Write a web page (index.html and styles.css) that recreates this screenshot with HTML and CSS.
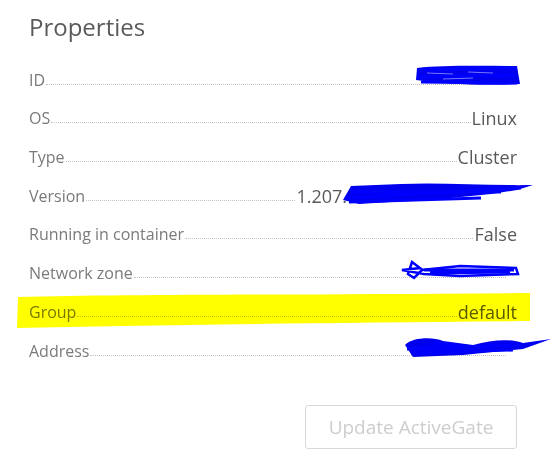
FILE: index.html
```html
<!DOCTYPE html>
<html>
<head>
<meta charset="utf-8">
<link rel="stylesheet" href="styles.css">
</head>
<body>
<div class="panel">
  <h1 class="title">Properties</h1>
  <div class="props">
    <div class="row"><span class="label">ID</span><span class="leader"></span><span class="value scr-id"></span>
      <svg class="scribble s-id" width="110" height="24" viewBox="0 0 110 24"><path d="M4 4 C30 1 70 2 104 2 L107 20 C70 22 30 20 3 16 Z" fill="#0000ee"/><path d="M4 6 L104 4 M6 13 L102 11 M8 18 L104 19" stroke="#0000ff" stroke-width="3" fill="none"/><path d="M14 9 L40 10 M55 8 L80 9 M30 15 L60 14" stroke="#7777ff" stroke-width="1" fill="none"/></svg>
    </div>
    <div class="row"><span class="label">OS</span><span class="leader"></span><span class="value">Linux</span></div>
    <div class="row"><span class="label">Type</span><span class="leader"></span><span class="value">Cluster</span></div>
    <div class="row"><span class="label">Version</span><span class="leader"></span><span class="value v-version">1.207.</span>
      <svg class="scribble s-ver" width="196" height="26" viewBox="0 0 196 26"><path d="M2 20 L10 6 L60 4 C100 2 150 6 192 5 L176 10 L150 14 L120 17 L90 20 L50 22 L18 24 Z" fill="#0000ee"/><path d="M4 18 L180 8 M10 12 L160 12 M8 22 L140 18" stroke="#0000ff" stroke-width="3" fill="none"/></svg>
    </div>
    <div class="row"><span class="label">Running in container</span><span class="leader"></span><span class="value">False</span></div>
    <div class="row"><span class="label">Network zone</span><span class="leader"></span><span class="value v-blank"></span>
      <svg class="scribble s-net" width="120" height="20" viewBox="0 0 120 20"><path d="M2 10 L20 8 L12 2 L8 14 L14 18 L22 10 L60 6 L116 8 L118 14 L60 16 L24 14 Z" fill="none" stroke="#0000ff" stroke-width="2.5"/><path d="M24 10 L114 10 M30 13 L110 12" stroke="#0000ff" stroke-width="3" fill="none"/></svg>
    </div>
    <div class="row group"><span class="label">Group</span><span class="leader"></span><span class="value">default</span>
      <svg class="hilite" width="516" height="36" viewBox="0 0 516 36"><path d="M2 4 C120 1 300 2 514 0 L514 28 C300 30 120 32 1 35 Z" fill="#ffff00"/></svg>
    </div>
    <div class="row"><span class="label">Address</span><span class="leader"></span><span class="value v-blank"></span>
      <svg class="scribble s-addr" width="150" height="24" viewBox="0 0 150 24"><path d="M2 10 C10 2 30 2 40 6 L70 10 C90 4 110 4 120 8 L148 4 L120 14 L100 16 L60 20 L10 22 Z" fill="#0000ee"/><path d="M4 14 L118 10 M8 18 L110 15 M30 8 L70 12" stroke="#0000ff" stroke-width="3" fill="none"/></svg>
    </div>
  </div>
  <div class="actions">
    <button class="btn" disabled>Update ActiveGate</button>
  </div>
</div>
</body>
</html>
```
FILE: styles.css
```css
html, body {
  margin: 0;
  padding: 0;
  background: #ffffff;
}
body {
  width: 555px;
  height: 473px;
  overflow: hidden;
  font-family: "Open Sans", "Liberation Sans", sans-serif;
}
.panel {
  padding: 9px 38px 0 29px;
}
.title {
  margin: 0;
  font-size: 24px;
  font-weight: 400;
  color: #5a5a5a;
  line-height: 36px;
}
.props {
  margin-top: 18px;
}
.row {
  position: relative;
  display: flex;
  align-items: flex-end;
  height: 38.7px;
  line-height: 20px;
}
.row:first-child {
  margin-top: -12px;
}
.label {
  color: #7a7a7a;
  font-size: 16px;
  white-space: nowrap;
}
.leader {
  flex: 1;
  border-bottom: 1px dotted #c4c4c4;
  margin: 0 1px 5px 1px;
}
.value {
  color: #595959;
  font-size: 18px;
  white-space: nowrap;
}
.v-version {
  margin-right: 170px;
}
.v-blank, .scr-id {
  width: 10px;
}
.scribble {
  position: absolute;
  pointer-events: none;
}
.s-id { right: -6px; top: 13px; }
.s-ver { right: -20px; top: 13px; }
.s-net { right: -3px; top: 16px; }
.s-addr { right: -36px; top: 13px; }
.hilite {
  position: absolute;
  left: -13px;
  top: 10px;
  mix-blend-mode: multiply;
  pointer-events: none;
}
.actions {
  display: flex;
  justify-content: flex-end;
  margin-top: 44px;
}
.btn {
  width: 212px;
  height: 44px;
  border: 1px solid #d8d8d8;
  border-radius: 3px;
  background: #ffffff;
  color: #cdcdcd;
  font-family: "Open Sans", "Liberation Sans", sans-serif;
  font-size: 19px;
  padding: 0;
}
```
